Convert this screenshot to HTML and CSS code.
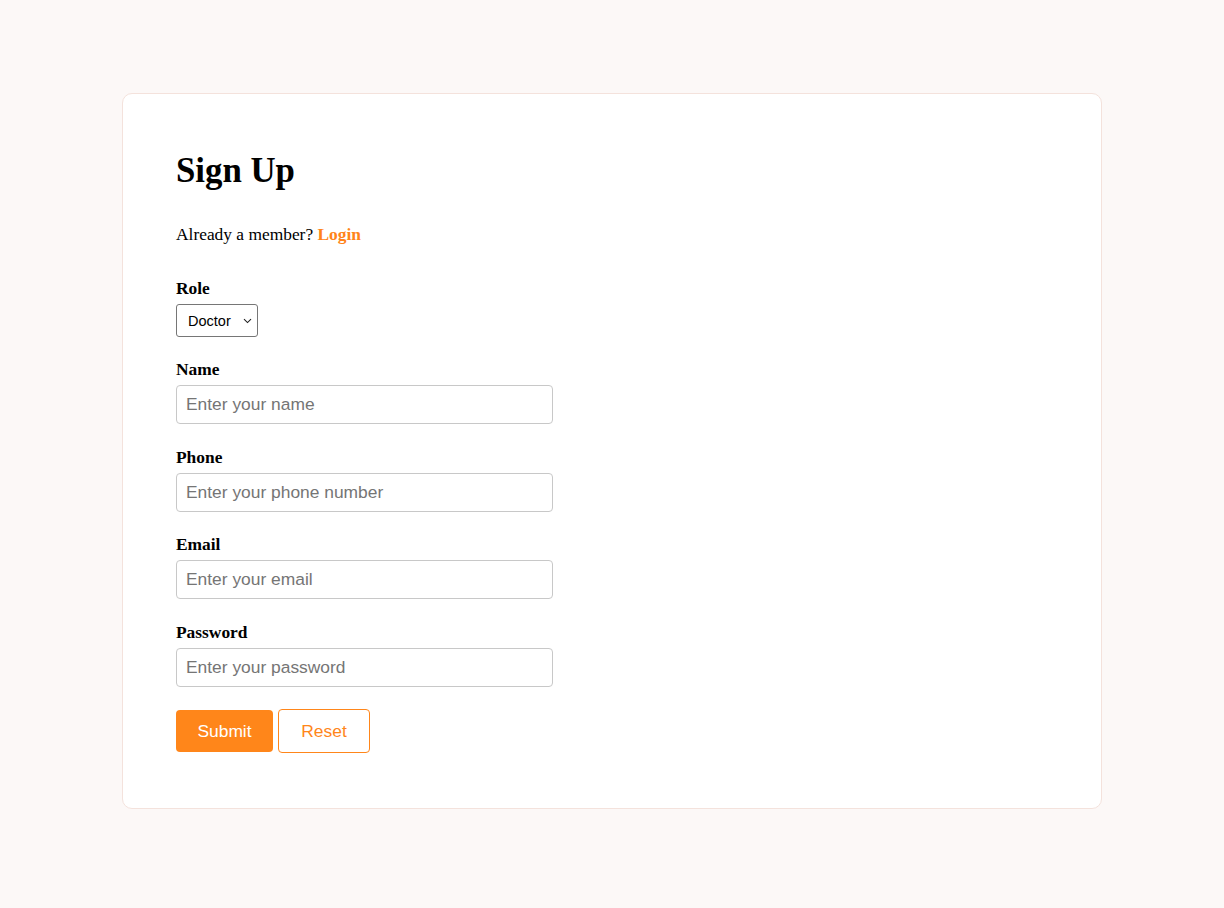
FILE: index.html
```html
<!DOCTYPE html>
<html lang="en">
<head>
<meta charset="utf-8">
<title>Sign Up</title>
<link rel="stylesheet" href="styles.css">
</head>
<body>
<div class="card">
  <h1 class="title">Sign Up</h1>
  <p class="intro">Already a member? <a class="login" href="#">Login</a></p>
  <form class="form">
    <div class="group">
      <label class="label" for="role">Role</label>
      <span class="select-wrap">
        <select class="select" id="role">
          <option>Doctor</option>
          <option>Patient</option>
        </select>
        <svg class="chevron" width="9" height="6" viewBox="0 0 9 6" aria-hidden="true"><path d="M1 1.2 L4.5 4.6 L8 1.2" fill="none" stroke="#222" stroke-width="1.1"/></svg>
      </span>
    </div>
    <div class="group">
      <label class="label" for="name">Name</label>
      <input class="input" id="name" type="text" placeholder="Enter your name">
    </div>
    <div class="group">
      <label class="label" for="phone">Phone</label>
      <input class="input" id="phone" type="text" placeholder="Enter your phone number">
    </div>
    <div class="group">
      <label class="label" for="email">Email</label>
      <input class="input" id="email" type="email" placeholder="Enter your email">
    </div>
    <div class="group">
      <label class="label" for="password">Password</label>
      <input class="input" id="password" type="password" placeholder="Enter your password">
    </div>
    <div class="actions">
      <button class="btn btn-primary" type="submit">Submit</button>
      <button class="btn btn-outline" type="reset">Reset</button>
    </div>
  </form>
</div>
</body>
</html>
```
FILE: styles.css
```css
html, body {
  margin: 0;
  padding: 0;
}
body {
  background: #fcf8f7;
  font-family: "Liberation Serif", "Times New Roman", serif;
  font-size: 17.4px;
  color: #000;
}
.card {
  box-sizing: border-box;
  width: 980px;
  margin: 93px auto 0;
  padding: 57px 53px 55px;
  background: #fff;
  border: 1px solid #f4e2dc;
  border-radius: 10px;
}
.title {
  margin: 0;
  font-size: 34.8px;
  line-height: 40px;
  font-weight: bold;
}
.intro {
  margin: 33px 0 0;
  line-height: 20px;
}
.login {
  color: #ff8419;
  font-weight: bold;
  text-decoration: none;
}
.form {
  margin-top: 34px;
}
.group {
  margin-bottom: 22.4px;
}
.group:last-of-type {
  margin-bottom: 23px;
}
.label {
  display: block;
  font-weight: bold;
  line-height: 20px;
  margin-bottom: 6px;
}
.select-wrap {
  position: relative;
  display: inline-block;
  vertical-align: top;
}
.select {
  display: block;
  box-sizing: border-box;
  width: 82px;
  height: 33px;
  padding: 0 18px 0 11px;
  font-family: "Liberation Sans", Arial, sans-serif;
  font-size: 14.5px;
  color: #000;
  background: #fff;
  border: 1px solid #767676;
  border-radius: 3px;
  appearance: none;
  -webkit-appearance: none;
}
.chevron {
  position: absolute;
  right: 6px;
  top: 14px;
  pointer-events: none;
}
.input {
  box-sizing: border-box;
  display: block;
  width: 377px;
  height: 39px;
  padding: 0 9px;
  font-family: "Liberation Sans", Arial, sans-serif;
  font-size: 17.4px;
  color: #000;
  background: #fff;
  border: 1px solid #c8c8c8;
  border-radius: 4px;
}
.input::placeholder {
  color: #757575;
}
.actions {
  display: flex;
  align-items: center;
  gap: 5px;
}
.btn {
  box-sizing: border-box;
  font-family: "Liberation Sans", Arial, sans-serif;
  font-size: 17.4px;
  line-height: 20px;
  border-radius: 4px;
  cursor: pointer;
}
.btn-primary {
  width: 97px;
  height: 42px;
  padding: 0;
  color: #fff;
  background: #ff861a;
  border: none;
}
.btn-outline {
  width: 92px;
  height: 44px;
  padding: 0;
  color: #ff861a;
  background: #fff;
  border: 1.5px solid #ff861a;
}
```
